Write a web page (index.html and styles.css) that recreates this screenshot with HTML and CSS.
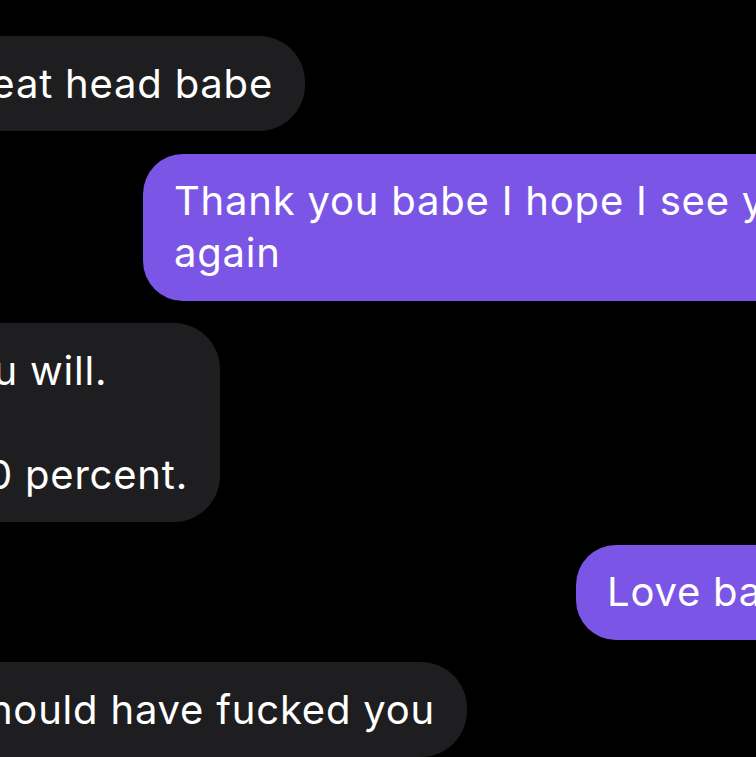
FILE: index.html
```html
<!DOCTYPE html>
<html lang="en">
<head>
<meta charset="utf-8">
<title>Chat</title>
<link rel="stylesheet" href="styles.css">
</head>
<body>
<main class="thread">
  <div class="row received row-1">
    <div class="bubble in">Great head babe</div>
  </div>
  <div class="row sent row-2">
    <div class="bubble out">Thank you babe I hope I see you<br>again</div>
  </div>
  <div class="row received row-3">
    <div class="bubble in">You will.<br><br>100 percent.</div>
  </div>
  <div class="row sent row-4">
    <div class="bubble out">Love babe</div>
  </div>
  <div class="row received row-5">
    <div class="bubble in">I should have fucked you</div>
  </div>
</main>
</body>
</html>
```

FILE: styles.css
```css
html, body {
  margin: 0;
  padding: 0;
  background: #000;
  overflow: hidden;
  width: 756px;
  height: 757px;
}

.thread {
  display: flex;
  flex-direction: column;
  gap: 22.5px;
  padding-top: 36px;
  font-family: "Inter", "Noto Sans", sans-serif;
  font-size: 40px;
  line-height: 52px;
  letter-spacing: 0.8px;
  color: #fff;
}

.row {
  display: flex;
}

.received {
  justify-content: flex-end;
}

.row-1 { width: 305px; }
.row-3 { width: 220px; }
.row-5 { width: 467px; }

.sent {
  justify-content: flex-start;
}

.row-2 { padding-left: 143px; }
.row-4 { padding-left: 576px; }

.bubble {
  flex: none;
  white-space: nowrap;
  padding: 21.5px 32px 21.5px 31px;
  border-radius: 46px;
}

.in {
  background: #1e1e20;
}

.out {
  background: #7b56e6;
  border-radius: 40px;
}
```
